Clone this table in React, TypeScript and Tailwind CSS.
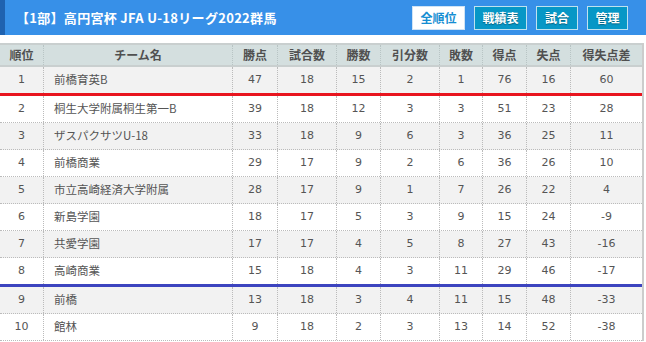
import React from "react";

const rows: (string | number)[][] = [
  [1, "前橋育英B", 47, 18, 15, 2, 1, 76, 16, 60],
  [2, "桐生大学附属桐生第一B", 39, 18, 12, 3, 3, 51, 23, 28],
  [3, "ザスパクサツU-18", 33, 18, 9, 6, 3, 36, 25, 11],
  [4, "前橋商業", 29, 17, 9, 2, 6, 36, 26, 10],
  [5, "市立高崎経済大学附属", 28, 17, 9, 1, 7, 26, 22, 4],
  [6, "新島学園", 18, 17, 5, 3, 9, 15, 24, -9],
  [7, "共愛学園", 17, 17, 4, 5, 8, 27, 43, -16],
  [8, "高崎商業", 15, 18, 4, 3, 11, 29, 46, -17],
  [9, "前橋", 13, 18, 3, 4, 11, 15, 48, -33],
  [10, "館林", 9, 18, 2, 3, 13, 14, 52, -38],
];

const headers = ["順位", "チーム名", "勝点", "試合数", "勝数", "引分数", "敗数", "得点", "失点", "得失点差"];

const gridCols = "grid grid-cols-[44px_189px_45px_59px_44px_59px_43px_44px_44px_71px]";
const cjk = { fontFamily: '"Noto Sans CJK JP", "Noto Sans", sans-serif' };
const num = { fontFamily: '"DejaVu Sans", "Noto Sans CJK JP", sans-serif' };

export default function App() {
  return (
    <div className="w-[646px] h-[342px] bg-white overflow-hidden" style={cjk}>
      <div className="h-[35px] bg-[#3790e8] flex items-center border-l-[5px] border-[#1f62b0]">
        <div className="pl-[11px] text-white font-bold text-[13px] tracking-[0.3px]">
          【1部】高円宮杯 JFA U-18リーグ2022群馬
        </div>
        <div className="ml-auto flex items-center gap-[9px] pr-[18px]">
          <div className="w-[53px] h-[24px] bg-white border border-[#cfe3f5] text-[#168ed2] font-bold text-[12px] flex items-center justify-center">
            全順位
          </div>
          <div className="w-[53px] h-[24px] bg-[#0797c6] border border-[#bfe2ef] text-white font-bold text-[12px] flex items-center justify-center [text-shadow:0_1px_1px_rgba(0,0,0,0.35)]">
            戦績表
          </div>
          <div className="w-[42px] h-[24px] bg-[#0797c6] border border-[#bfe2ef] text-white font-bold text-[12px] flex items-center justify-center [text-shadow:0_1px_1px_rgba(0,0,0,0.35)]">
            試合
          </div>
          <div className="w-[41px] h-[24px] bg-[#0797c6] border border-[#bfe2ef] text-white font-bold text-[12px] flex items-center justify-center [text-shadow:0_1px_1px_rgba(0,0,0,0.35)]">
            管理
          </div>
        </div>
      </div>
      <div className="mt-[8px] w-[644px] border-r-2 border-[#cccccc]">
        <div className={`${gridCols} bg-[#d4dfdf] border-t-2 border-b-2 border-[#c9cfcf] h-[24px]`}>
          {headers.map((h, i) => (
            <div
              key={h}
              className={`flex items-center justify-center text-[12px] font-bold text-[#505050] ${i < 9 ? "border-r border-dotted border-[#b8c4c4]" : ""}`}
            >
              {h}
            </div>
          ))}
        </div>
        {rows.map((r, ri) => {
          const bg = ri % 2 === 0 ? "bg-[#f2f2f2]" : "bg-white";
          const bottom =
            ri === 0
              ? "border-b-[3px] border-solid border-[#e8141e]"
              : ri === 7
              ? "border-b-[3px] border-solid border-[#3c44bf]"
              : "border-b border-dotted border-[#bbbbbb]";
          return (
            <div key={ri} className={`${gridCols} ${bg} ${bottom}`}>
              {r.map((c, ci) => (
                <div
                  key={ci}
                  className={`h-[26px] flex items-center text-[#555555] ${
                    ci === 1 ? "justify-start pl-[10px] text-[11.5px]" : "justify-center text-[11px]"
                  } ${ci < 9 ? "border-r border-dotted border-[#bbbbbb]" : ""}`}
                  style={ci === 1 ? cjk : num}
                >
                  {c}
                </div>
              ))}
            </div>
          );
        })}
      </div>
    </div>
  );
}
